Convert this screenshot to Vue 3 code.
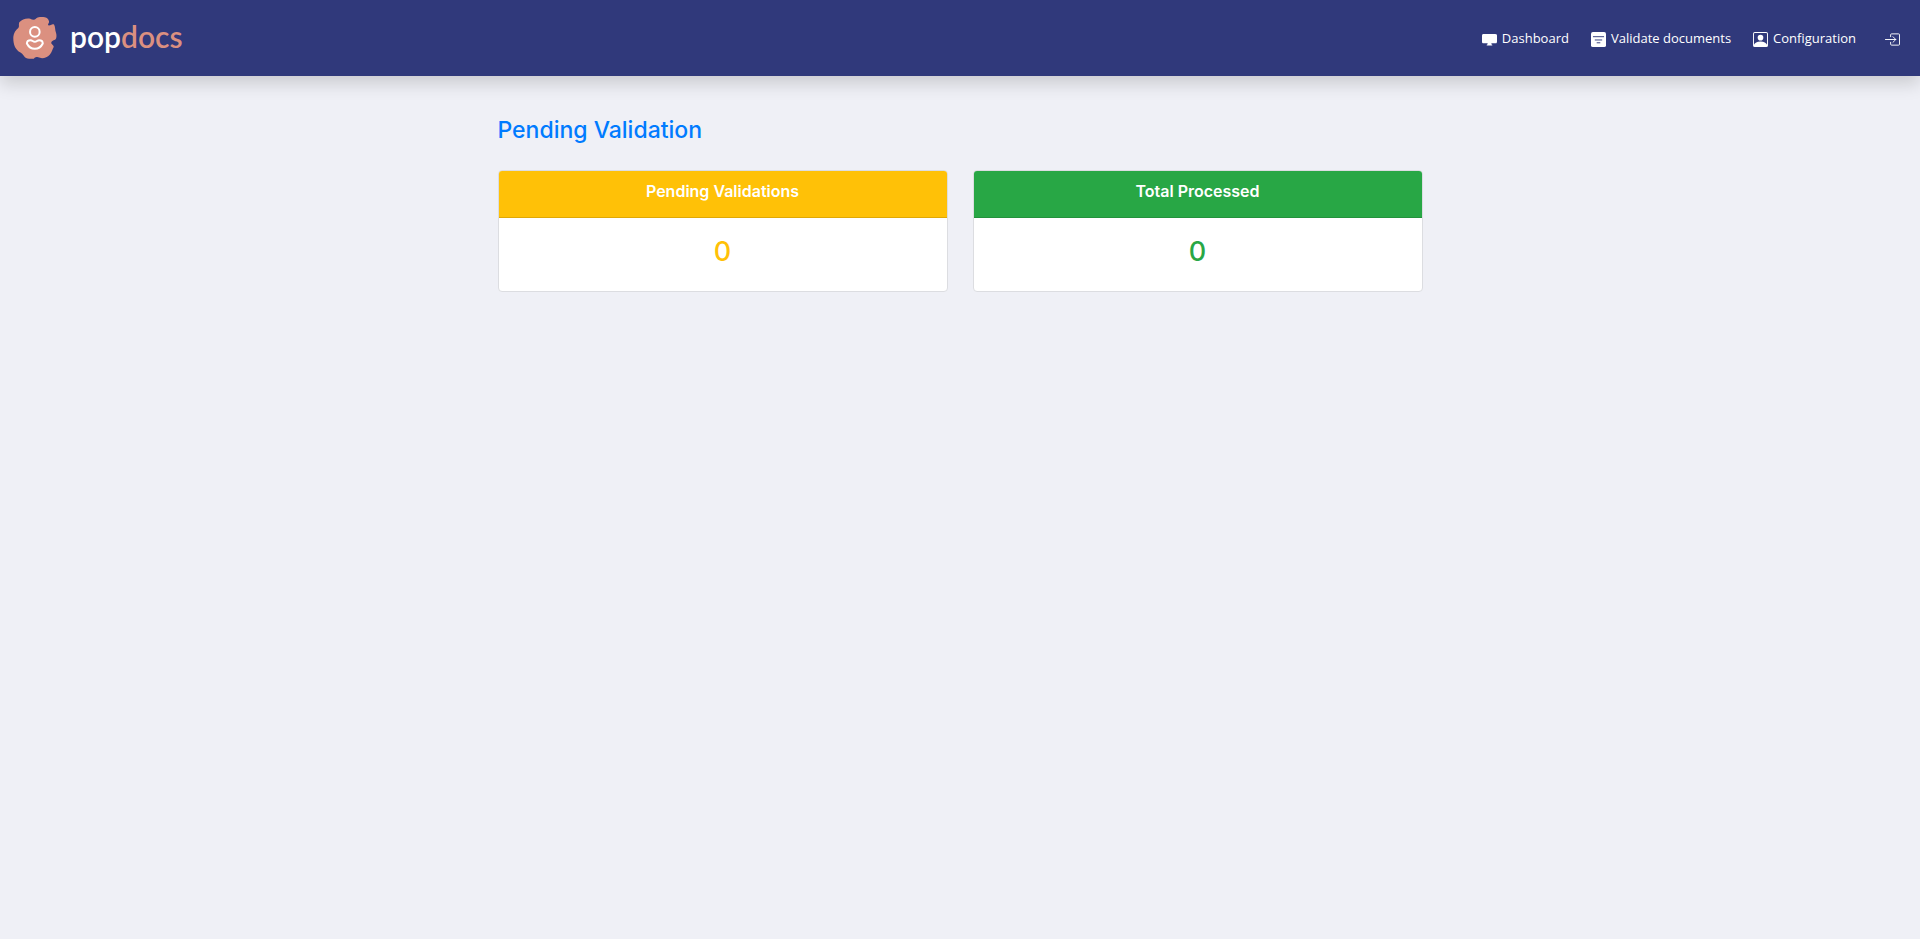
<script setup>
const cards = [
  { title: 'Pending Validations', value: 0, tone: 'warning' },
  { title: 'Total Processed', value: 0, tone: 'success' },
]
</script>

<template>
  <div class="page">
    <header class="topbar">
      <a class="brand" href="#" aria-label="popdocs">
        <svg class="mark" viewBox="39 51 131 127" aria-hidden="true">
          <path fill="#db9080" d="M57 67C65 58 77 54 90 56C97 60 104 60 107 56C115 49 129 50 139 53C145 57 149 64 146 69C143 74 143 77 147 77C152 77 156 71 162 74C166 80 165 91 168 99C171 109 169 117 165 120C158 122 152 126 154 131C158 136 162 138 161 142C157 149 156 158 149 165C140 175 126 178 114 173C108 170 104 173 101 177C91 178 80 178 74 173C69 164 63 159 55 155C44 147 38 132 39 111C40 99 46 91 54 84C58 80 54 74 57 67Z" />
          <circle cx="104" cy="96" r="14.5" fill="none" stroke="#fff" stroke-width="6" />
          <path fill="none" stroke="#fff" stroke-width="6" stroke-linejoin="round" d="M91 121C97 121 98 126 104 126C110 126 111 121 117 121C123 121 128 125 128 131C123 141 115 147 104 147C93 147 85 141 80 131C80 125 85 121 91 121Z" />
        </svg>
        <span class="wordmark">pop<span class="accent">docs</span></span>
      </a>
      <nav class="nav" aria-label="Main">
        <a class="link" href="#">
          <svg class="icon" viewBox="0 0 16 16" fill="currentColor" aria-hidden="true">
            <path d="M6 13c0-.4 0-.8-.1-1H2c-2 0-2-1-2-2V4c0-2 1-2 2-2h12c2 0 2 1 2 2v6c0 2-1 2-2 2h-3.900c-.1.200-.1.600-.1 1 .4.300.9.300 1 1v.300H5V14c.1-.7.600-.7 1-1z" />
          </svg>
          <span>Dashboard</span>
        </a>
        <a class="link" href="#">
          <svg class="icon" viewBox="0 0 16 16" aria-hidden="true">
            <rect width="16" height="16" rx="2" fill="currentColor" />
            <path d="M2.500 5h11M4.500 8.500h7M6.500 11.500h3" fill="none" stroke="#30397b" stroke-linecap="round" />
          </svg>
          <span>Validate documents</span>
        </a>
        <a class="link" href="#">
          <svg class="icon" viewBox="0 0 16 16" fill="currentColor" aria-hidden="true">
            <circle cx="8" cy="6" r="3" />
            <path fill-rule="evenodd" d="M2 0h12a2 2 0 0 1 2 2v12a2 2 0 0 1-2 2H2a2 2 0 0 1-2-2V2a2 2 0 0 1 2-2zm0 1a1 1 0 0 0-1 1v11.500C2 11.500 4 10 8 10s6 1.500 7 3.500V2a1 1 0 0 0-1-1z" />
          </svg>
          <span>Configuration</span>
        </a>
        <a class="link exit" href="#" aria-label="Log out">
          <svg class="icon" viewBox="0 0 16 16" fill="none" stroke="currentColor" stroke-linecap="round" stroke-linejoin="round" aria-hidden="true">
            <path d="M6 5V3q0-1 1-1h7.500q1 0 1 1v10q0 1-1 1H7q-1 0-1-1v-2M.5 8h11M8.500 5l3 3-3 3" />
          </svg>
        </a>
      </nav>
    </header>
    <main class="content">
      <h1 class="title">Pending Validation</h1>
      <div class="cards">
        <section v-for="card in cards" :key="card.title" class="card" :class="card.tone">
          <h2 class="card-head">{{ card.title }}</h2>
          <p class="card-value">{{ card.value }}</p>
        </section>
      </div>
    </main>
  </div>
</template>

<style>
body {
  margin: 0;
  background: #eff0f6;
}
</style>

<style scoped>
.page {
  min-height: 100vh;
  background: #eff0f6;
  font-family: Inter, "Liberation Sans", sans-serif;
}
.topbar {
  display: flex;
  align-items: center;
  justify-content: space-between;
  min-height: 76px;
  box-sizing: border-box;
  padding: 0 20px 0 13px;
  background: #30397b;
  box-shadow: 0 8px 16px rgba(0, 0, 0, 0.15);
}
.brand {
  display: flex;
  align-items: center;
  gap: 13px;
  color: #fff;
  text-decoration: none;
}
.mark {
  width: 44px;
  height: 42px;
}
.wordmark {
  padding-bottom: 4px;
  font: 600 30px/36px Lato, sans-serif;
}
.accent {
  color: #db9080;
}
.nav {
  display: flex;
  align-items: center;
  gap: 22px;
}
.link {
  display: flex;
  align-items: center;
  gap: 5px;
  color: #fff;
  font: 13px/20px "Open Sans", sans-serif;
  text-decoration: none;
}
.exit {
  margin-left: 7px;
}
.icon {
  width: 15px;
  height: 15px;
  margin-top: 2px;
}
.content {
  max-width: 925px;
  margin: 0 auto;
  padding: 40px 16px;
}
.title {
  margin: 0 0 26px;
  color: #007bff;
  font-size: 23px;
  font-weight: 500;
  line-height: 28px;
}
.cards {
  display: grid;
  grid-template-columns: 1fr 1fr;
  gap: 25px;
}
.card {
  border: 1px solid #dcdde1;
  border-radius: 4px;
  background: #fff;
  text-align: center;
  overflow: hidden;
}
.card-head {
  margin: 0;
  padding: 10px 20px 16px;
  border-bottom: 1px solid rgba(0, 0, 0, 0.125);
  color: #fff;
  font-size: 16px;
  font-weight: 600;
  line-height: 20px;
}
.card-value {
  margin: 0;
  padding: 17px 20px 22px;
  font-size: 27px;
  font-weight: 500;
  line-height: 34px;
}
.warning .card-head {
  background: #ffc107;
}
.warning .card-value {
  color: #ffc107;
}
.success .card-head {
  background: #28a745;
}
.success .card-value {
  color: #28a745;
}
</style>
